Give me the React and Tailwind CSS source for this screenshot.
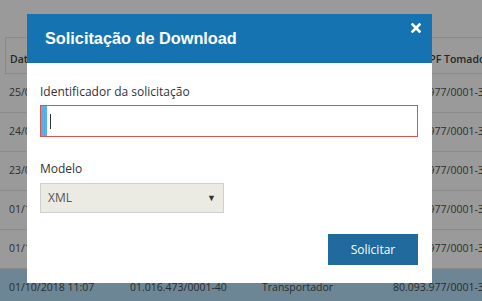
import React from 'react';

const rows = [
  { data: '25/09/2018 10:42', emit: '01.016.473/0001-40', tipo: 'Transportador', tom: '80.093.977/0001-30' },
  { data: '24/09/2018 16:15', emit: '01.016.473/0001-40', tipo: 'Transportador', tom: '80.093.977/0001-30' },
  { data: '23/09/2018 09:31', emit: '01.016.473/0001-40', tipo: 'Transportador', tom: '80.093.977/0001-30' },
  { data: '01/10/2018 11:20', emit: '01.016.473/0001-40', tipo: 'Transportador', tom: '80.093.977/0001-30' },
  { data: '01/10/2018 11:12', emit: '01.016.473/0001-40', tipo: 'Transportador', tom: '80.093.977/0001-30' },
];

const font = { fontFamily: '"Open Sans", "Noto Sans", sans-serif' };

const Row = ({ r, active }) => (
  <div
    className={`flex h-[39px] shrink-0 items-center border-b border-[#8a8a8a] pl-[9px] text-[10.5px] whitespace-nowrap ${
      active ? 'bg-[#6c8696] text-[#2b2b2b]' : 'text-[#2e2e2e]'
    }`}
  >
    <span className="w-[121px] shrink-0">{r.data}</span>
    <span className="w-[132px] shrink-0">{r.emit}</span>
    <span className="w-[131px] shrink-0">{r.tipo}</span>
    <span className="shrink-0">{r.tom}</span>
  </div>
);

export default function App() {
  return (
    <div className="relative h-[301px] w-[482px] overflow-hidden bg-[#9a9a9a]" style={font}>
      {/* tabela ao fundo */}
      <div className="flex flex-col pt-[37px]">
        <div className="ml-[5px] flex h-[37px] shrink-0 items-center border-y border-l border-[#8a8a8a] pt-[8px] pl-[4px] text-[10.5px] font-semibold whitespace-nowrap text-[#262626]">
          <span className="w-[121px] shrink-0">Data</span>
          <span className="w-[132px] shrink-0">CNPJ Emitente</span>
          <span className="w-[131px] shrink-0">Tipo</span>
          <span className="shrink-0">CNPJ/CPF Tomador</span>
        </div>
        {rows.map((r) => (
          <Row key={r.data} r={r} />
        ))}
        <Row
          active
          r={{ data: '01/10/2018 11:07', emit: '01.016.473/0001-40', tipo: 'Transportador', tom: '80.093.977/0001-30' }}
        />
      </div>

      {/* modal */}
      <div className="absolute top-[14px] left-[27px] flex h-[269px] w-[405px] flex-col bg-white">
        <div className="flex h-[49px] shrink-0 items-center justify-between bg-[#1673b1] pr-[11px] pl-[18px]">
          <h2
            className="text-[16.3px] font-bold text-white"
            style={{ fontFamily: '"Liberation Sans", Arial, sans-serif' }}
          >
            Solicitação de Download
          </h2>
          <svg className="mb-[22px] h-[10px] w-[10px]" viewBox="0 0 10 10" stroke="white" strokeWidth="2.6" strokeLinecap="square">
            <path d="M1.5 1.5l7 7M8.5 1.5l-7 7" />
          </svg>
        </div>

        <div className="flex flex-1 flex-col pt-[20px] pr-[14px] pb-[18px] pl-[13px] text-[12px] text-[#333]">
          <label className="mb-[4px] leading-[18px]">Identificador da solicitação</label>
          <div className="flex h-[32px] items-center border border-[#d9534f]">
            <div className="h-full w-[6px] bg-[#5aafe6]" />
            <div className="ml-[3px] h-[15px] w-px bg-[#333]" />
          </div>

          <label className="mt-[23px] mb-[5px] leading-[18px]">Modelo</label>
          <div className="flex h-[30px] w-[184px] items-center justify-between border border-[#cfcfcf] bg-[#ebebe4] pr-[7px] pl-[7px] text-[#555]">
            <span>XML</span>
            <span className="text-[9px] text-[#333]">▼</span>
          </div>

          <div className="mt-auto flex justify-end">
            <button className="h-[31px] w-[90px] bg-[#206a9e] text-[12px] text-white">Solicitar</button>
          </div>
        </div>
      </div>
    </div>
  );
}
